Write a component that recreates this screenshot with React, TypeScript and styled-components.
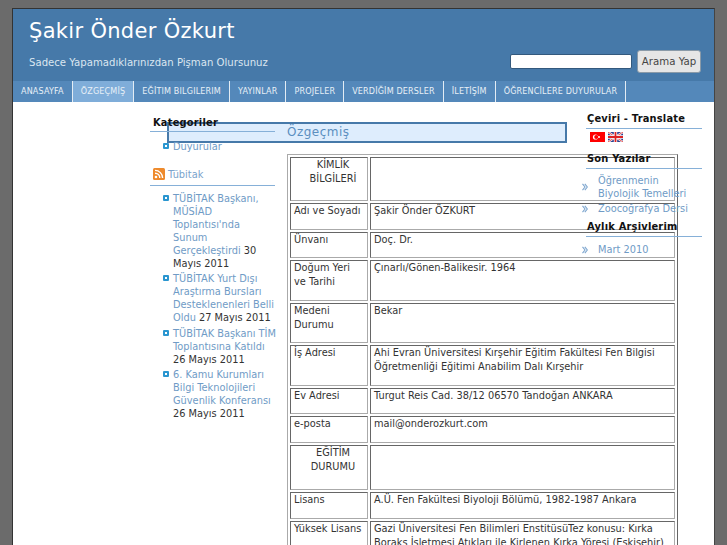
import React from "react";
import styled, { createGlobalStyle } from "styled-components";

const Global = createGlobalStyle`
  html, body { margin: 0; padding: 0; height: 545px; overflow: hidden; background: #6b6b6b; }
  body { font-family: "DejaVu Sans", sans-serif; font-size: 10px; color: #333; }
`;

const Page = styled.div`
  width: 703px;
  height: 537px;
  margin: 8px 0 0 12px;
  border: 1px solid #333;
  border-right-color: #444;
  border-bottom: 0;
  background: #fff;
  overflow: hidden;
  box-sizing: border-box;
`;

const Header = styled.header`
  height: 72px;
  background: #4679a9;
  display: flex;
  justify-content: space-between;
  padding: 0 13px 0 16px;
`;
const Brand = styled.div`
  display: flex;
  flex-direction: column;
`;
const Title = styled.h1`
  margin: 9px 0 0;
  font-size: 21px;
  line-height: 26px;
  font-weight: 400;
  color: #fff;
  letter-spacing: 0.015em;
`;
const Tagline = styled.p`
  margin: 12px 0 0;
  font-size: 10.15px;
  line-height: 14px;
  color: #dbe6f0;
`;
const Search = styled.form`
  display: flex;
  align-items: center;
  gap: 5px;
  margin-top: 41px;
  height: 23px;
`;
const SearchInput = styled.input`
  width: 122px;
  height: 15px;
  padding: 0;
  box-sizing: border-box;
  background: #fff;
  border: 1px solid #33597d;
  border-radius: 2px;
`;
const SearchButton = styled.button`
  width: 64px;
  height: 23px;
  padding: 0;
  font: 10.2px "DejaVu Sans", sans-serif;
  color: #444;
  background: #e6e6e6;
  border: 1px solid #8a9aa8;
  border-radius: 3px;
`;

const Nav = styled.nav`
  display: flex;
  height: 21px;
  background: #5488ba;
`;
const NavItem = styled.a<{ $active?: boolean }>`
  display: flex;
  align-items: center;
  padding: 0 8px;
  font-size: 8.05px;
  letter-spacing: 0.02em;
  color: #e8f0f7;
  border-right: 1px solid #e3ecf4;
  background: ${(p) => (p.$active ? "#7fadd9" : "transparent")};
`;

const Body = styled.div`
  display: grid;
  grid-template-columns: 137px 17px 108px 12px 280px 19px 92px 24px;
  grid-template-rows: auto 1fr;
`;

const LeftColumn = styled.aside`
  grid-column: 2 / span 2;
  grid-row: 1 / span 2;
  padding-top: 14px;
  position: relative;
  z-index: 2;
`;
const RightColumn = styled.aside`
  grid-column: 7 / span 2;
  grid-row: 1 / span 2;
  position: relative;
  z-index: 2;
  padding-top: 10px;
`;
const WidgetTitle = styled.h3<{ $left?: boolean }>`
  margin: 0;
  padding: 0 0 ${(p) => (p.$left ? "1px" : "2px")} ${(p) => (p.$left ? "3px" : "1px")};
  font-size: 9.9px;
  line-height: 14px;
  font-weight: 700;
  color: #111;
  letter-spacing: 0.02em;
  border-bottom: 1px solid #86b0d8;
`;
const LeftList = styled.ul`
  list-style: none;
  margin: 0;
  padding: 0;
`;

const LeftItem = styled.li`
  position: relative;
  margin: 0 -2px 0 23px;
  line-height: 13px;
  font-size: 9.8px;
  padding-bottom: 2.5px;
  color: #333;
  &::before {
    content: "";
    position: absolute;
    left: -10px;
    top: 3px;
    width: 2px;
    height: 2px;
    background: #fff;
    border: 2px solid #2a96d0;
    border-radius: 1px;
  }
`;
const Link = styled.a`
  color: #6f9bc6;
`;

const FeedTitle = styled.div`
  display: flex;
  align-items: flex-start;
  gap: 3px;
  box-sizing: border-box;
  font-size: 9.8px;
  line-height: 14px;
  height: 20px;
  padding: 2px 0 0 3px;
  color: #7aa3cc;
  border-bottom: 1px solid #86b0d8;
`;

const Flags = styled.div`
  display: flex;
  gap: 3px;
  margin: 3px 0 0 4px;
  height: 10px;
`;
const RightList = styled.ul<{ $top: number }>`
  list-style: none;
  margin: 0;
  padding: ${(p) => p.$top}px 0 0;
`;
const RightItem = styled.li`
  display: flex;
  align-items: center;
  gap: 10px;
  margin-left: -4px;
  font-size: 9.8px;
  line-height: 13px;
  color: #6f9bc6;
  margin-bottom: 2px;
  white-space: nowrap;
`;
const Chevron = styled.span`
  width: 6px;
  flex: none;
  display: flex;
`;

const PageTitle = styled.h2`
  grid-column: 3 / span 3;
  grid-row: 1;
  margin: 20px 0 0;
  padding-left: 118px;
  box-sizing: border-box;
  height: 21px;
  border: 2px solid #4679a9;
  background: #deedfd;
  color: #5b8fc0;
  font-size: 12px;
  font-weight: 400;
  line-height: 17px;
  letter-spacing: 0.04em;
  position: relative;
  z-index: 1;
`;

const Main = styled.main`
  grid-column: 5 / span 3;
  grid-row: 2;
  padding-top: 11px;
`;
const Table = styled.table`
  width: 391px;
  table-layout: fixed;
  border-collapse: separate;
  border-spacing: 2px;
  border: 1px solid #777;
  border-color: #aaa #666 #666 #aaa;
  font-size: 9.8px;
  color: #333;
`;
const Cell = styled.td<{ $center?: boolean; $h: number }>`
  height: ${(p) => p.$h}px;
  box-sizing: border-box;
  border: 1px solid #777;
  border-color: #666 #aaa #aaa #666;
  padding: 0 3px 0 ${(p) => (p.$center ? "11px" : "3px")};
  vertical-align: top;
  text-align: ${(p) => (p.$center ? "center" : "left")};
  line-height: 13.5px;
  white-space: nowrap;
`;
const LabelCol = styled.col`
  width: 78px;
`;

const RssIcon = () => (
  <svg width="12" height="12" viewBox="0 0 12 12">
    <rect width="12" height="12" rx="1.5" fill="#ee8a2c" />
    <circle cx="3" cy="9" r="1.3" fill="#fff" />
    <path d="M2 5.2a4.8 4.8 0 0 1 4.8 4.8M2 2.4a7.6 7.6 0 0 1 7.6 7.6" fill="none" stroke="#fff" strokeWidth="1.4" />
  </svg>
);
const TrFlag = () => (
  <svg width="15" height="10" viewBox="0 0 15 10">
    <rect width="15" height="10" fill="#f00" />
    <circle cx="5.5" cy="5" r="2.6" fill="#fff" />
    <circle cx="6.2" cy="5" r="2" fill="#f00" />
    <circle cx="9" cy="5" r="1" fill="#fff" />
  </svg>
);
const UkFlag = () => (
  <svg width="15" height="10" viewBox="0 0 15 10">
    <rect width="15" height="10" fill="#2a3f8f" />
    <path d="M0 0L15 10M15 0L0 10" stroke="#fff" strokeWidth="2.2" />
    <path d="M0 0L15 10M15 0L0 10" stroke="#d22" strokeWidth="0.8" />
    <path d="M7.5 0V10M0 5H15" stroke="#fff" strokeWidth="3.4" />
    <path d="M7.5 0V10M0 5H15" stroke="#d22" strokeWidth="1.8" />
  </svg>
);
const Chev = () => (
  <svg width="6" height="8" viewBox="0 0 6 8">
    <path d="M0.5 0.8L3 4L0.5 7.2M2.8 0.8L5.3 4L2.8 7.2" fill="none" stroke="#7ea6cf" strokeWidth="1.1" />
  </svg>
);

const navItems = ["ANASAYFA", "ÖZGEÇMİŞ", "EĞİTIM BILGILERIM", "YAYINLAR", "PROJELER", "VERDİĞİM DERSLER", "İLETİŞİM", "ÖĞRENCİLERE DUYURULAR"];

const rows: { label: React.ReactNode; value: React.ReactNode; h: number; center?: boolean }[] = [
  { label: <>KİMLİK<br />BİLGİLERİ</>, value: "", h: 44, center: true },
  { label: "Adı ve Soyadı", value: "Şakir Önder ÖZKURT", h: 27 },
  { label: "Ünvanı", value: "Doç. Dr.", h: 26 },
  { label: <>Doğum Yeri<br />ve Tarihi</>, value: "Çınarlı/Gönen-Balikesir. 1964", h: 41 },
  { label: <>Medeni<br />Durumu</>, value: "Bekar", h: 40 },
  { label: "İş Adresi", value: <>Ahi Evran Üniversitesi Kırşehir Eğitim Fakültesi Fen Bilgisi<br />Öğretmenliği Eğitimi Anabilim Dalı Kırşehir</>, h: 41 },
  { label: "Ev Adresi", value: "Turgut Reis Cad. 38/12 06570 Tandoğan ANKARA", h: 26 },
  { label: "e-posta", value: "mail@onderozkurt.com", h: 27 },
  { label: <>EĞİTİM<br />DURUMU</>, value: "", h: 45, center: true },
  { label: "Lisans", value: "A.Ü. Fen Fakültesi Biyoloji Bölümü, 1982-1987 Ankara", h: 27 },
  { label: "Yüksek Lisans", value: <>Gazi Üniversitesi Fen Bilimleri EnstitüsüTez konusu: Kırka<br />Boraks İşletmesi Atıkları ile Kirlenen Kırka Yöresi (Eskişehir)</>, h: 41 },
];

const feed: [string, string][] = [
  ["TÜBİTAK Başkanı, MÜSİAD Toplantısı'nda Sunum Gerçekleştirdi", " 30 Mayıs 2011"],
  ["TÜBİTAK Yurt Dışı Araştırma Bursları Desteklenenleri Belli Oldu", " 27 Mayıs 2011"],
  ["TÜBİTAK Başkanı TİM Toplantısına Katıldı", " 26 Mayıs 2011"],
  ["6. Kamu Kurumları Bilgi Teknolojileri Güvenlik Konferansı", " 26 Mayıs 2011"],
];

const Spacer = styled.div<{ $h: number }>`
  height: ${(p) => p.$h}px;
`;

export default function App() {
  return (
    <>
      <Global />
      <Page>
        <Header>
          <Brand>
            <Title>Şakir Önder Özkurt</Title>
            <Tagline>Sadece Yapamadıklarınızdan Pişman Olursunuz</Tagline>
          </Brand>
          <Search>
            <SearchInput />
            <SearchButton type="button">Arama Yap</SearchButton>
          </Search>
        </Header>
        <Nav>
          {navItems.map((n, i) => (
            <NavItem key={n} $active={i === 1}>{n}</NavItem>
          ))}
        </Nav>
        <Body>
          <LeftColumn>
            <WidgetTitle $left>Kategoriler</WidgetTitle>
            <Spacer $h={8} />
            <LeftList>
              <LeftItem><Link>Duyurular</Link></LeftItem>
            </LeftList>
            <Spacer $h={10} />
            <FeedTitle><RssIcon />Tübitak</FeedTitle>
            <Spacer $h={6} />
            <LeftList>
              {feed.map(([a, d]) => (
                <LeftItem key={a}><Link>{a}</Link>{d}</LeftItem>
              ))}
            </LeftList>
          </LeftColumn>
          <PageTitle>Özgeçmiş</PageTitle>
          <Main>
            <Table>
              <colgroup>
                <LabelCol />
                <col />
              </colgroup>
              <tbody>
                {rows.map((r, i) => (
                  <tr key={i}>
                    <Cell $h={r.h} $center={r.center}>{r.label}</Cell>
                    <Cell $h={r.h}>{r.value}</Cell>
                  </tr>
                ))}
              </tbody>
            </Table>
          </Main>
          <RightColumn>
            <WidgetTitle>Çeviri - Translate</WidgetTitle>
            <Flags><TrFlag /><UkFlag /></Flags>
            <Spacer $h={10} />
            <WidgetTitle>Son Yazılar</WidgetTitle>
            <RightList $top={5}>
              <RightItem><Chevron><Chev /></Chevron><span>Öğrenmenin<br />Biyolojik Temelleri</span></RightItem>
              <RightItem><Chevron><Chev /></Chevron>Zoocoğrafya Dersi</RightItem>
            </RightList>
            <Spacer $h={3} />
            <WidgetTitle>Aylık Arşivlerim</WidgetTitle>
            <RightList $top={6}>
              <RightItem><Chevron><Chev /></Chevron>Mart 2010</RightItem>
            </RightList>
          </RightColumn>
        </Body>
      </Page>
    </>
  );
}
